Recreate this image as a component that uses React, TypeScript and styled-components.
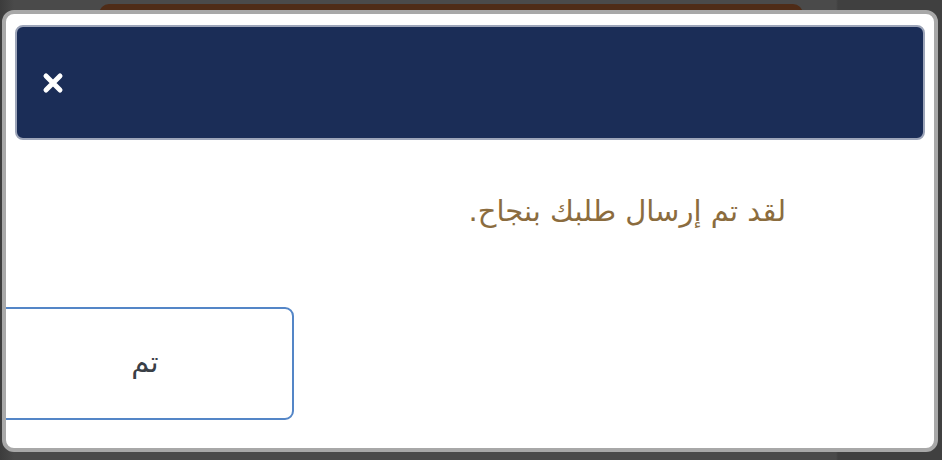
import React from "react";
import styled, { createGlobalStyle } from "styled-components";

const GlobalStyle = createGlobalStyle`
  html, body {
    margin: 0;
    padding: 0;
    background: #454545;
    overflow: hidden;
  }
  body {
    font-family: "DejaVu Sans", "Noto Sans", sans-serif;
  }
`;

const Page = styled.div`
  position: relative;
  width: 942px;
  height: 460px;
  background: linear-gradient(to right, #3c3c3c 0, #4a4a4a 14px, #4a4a4a 836px, #404040 838px);
  overflow: hidden;
`;

const BehindBar = styled.div`
  position: absolute;
  left: 99px;
  top: 4px;
  width: 704px;
  height: 30px;
  border-radius: 10px;
  background: #4f2c17;
`;

const Modal = styled.div`
  position: absolute;
  left: 2px;
  top: 10px;
  width: 936px;
  height: 442px;
  border: 4px solid #a8a8a8;
  border-radius: 12px;
  background: #ffffff;
  padding: 11px 9px;
  box-sizing: border-box;
  display: flex;
  flex-direction: column;
  overflow: hidden;
`;

const Header = styled.div`
  height: 115px;
  box-sizing: border-box;
  background: #1b2d57;
  border: 2px solid #9da5b9;
  border-radius: 8px;
  display: flex;
  align-items: center;
  padding-left: 25px;
  flex-shrink: 0;
`;

const CloseButton = styled.button`
  background: none;
  border: none;
  padding: 0;
  width: 22px;
  height: 22px;
  display: flex;
  cursor: pointer;
`;

const Body = styled.div`
  direction: rtl;
  padding: 50px 139px 0 0;
  height: 117px;
  flex-shrink: 0;
`;

const Message = styled.p`
  margin: 0;
  color: #8b6c3e;
  font-size: 29px;
  line-height: 42px;
`;

const Footer = styled.div`
  display: flex;
  justify-content: flex-start;
`;

const DoneButton = styled.button`
  width: 304px;
  height: 113px;
  margin-left: -25px;
  border: 2px solid #5486c7;
  border-radius: 9px;
  background: #ffffff;
  color: #3a3f47;
  font-family: "DejaVu Sans", "Noto Sans", sans-serif;
  font-size: 29px;
  padding: 0 0 4px 6px;
  cursor: pointer;
`;

const CloseIcon = () => (
  <svg width="22" height="22" viewBox="0 0 22 22">
    <path
      d="M4 4 L18 18 M18 4 L4 18"
      stroke="#ffffff"
      strokeWidth="5"
      strokeLinecap="round"
    />
  </svg>
);

const App = () => {
  return (
    <>
      <GlobalStyle />
      <Page>
        <BehindBar />
        <Modal>
          <Header>
            <CloseButton aria-label="close">
              <CloseIcon />
            </CloseButton>
          </Header>
          <Body>
            <Message>لقد تم إرسال طلبك بنجاح.</Message>
          </Body>
          <Footer>
            <DoneButton>تم</DoneButton>
          </Footer>
        </Modal>
      </Page>
    </>
  );
};

export default App;
